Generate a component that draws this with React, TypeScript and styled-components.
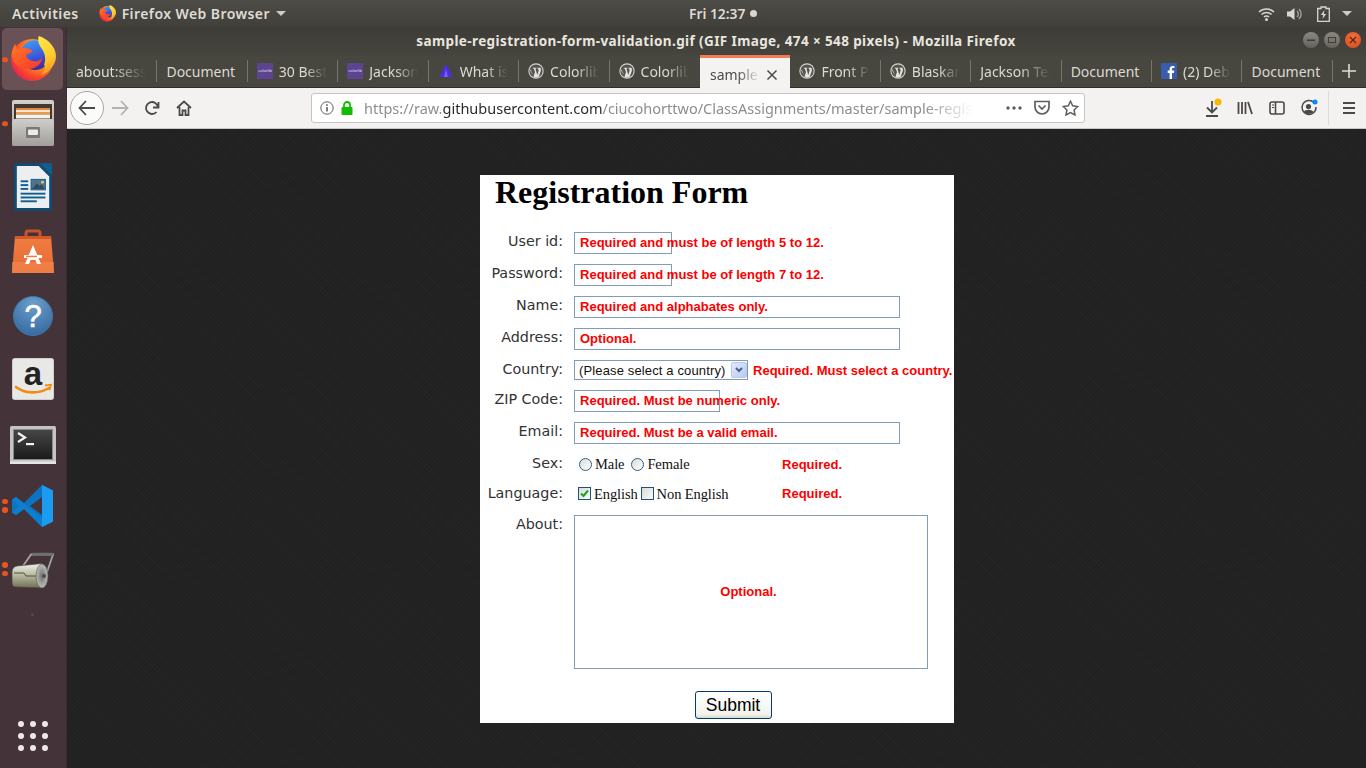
import React from "react";
import styled, { createGlobalStyle } from "styled-components";

const Global = createGlobalStyle`
  html, body { margin: 0; padding: 0; width: 1366px; height: 768px; overflow: hidden; background: #222; }
  * { box-sizing: border-box; }
`;
const uiFont = `"Noto Sans", "Open Sans", sans-serif`;

const Screen = styled.div`
  width: 1366px; height: 768px; display: flex; flex-direction: column; overflow: hidden;
`;
const TopBar = styled.header`
  height: 27px; flex: none; display: grid; grid-template-columns: 677px auto 1fr; align-items: center;
  background: linear-gradient(#4e4c46, #403f39);
  color: #dfdcd5; font: 600 14px ${uiFont}; padding: 0 14px 0 12px; letter-spacing: .42px;
`;
const TopLeft = styled.div`display: flex; align-items: center;`;
const AppMenu = styled.div`display: flex; align-items: center; gap: 6px; margin-left: 20px;`;
const Clock = styled.div`display: flex; align-items: center; gap: 5px; font-size: 13.8px; letter-spacing: 0;`;
const ClockDot = styled.span`width: 7px; height: 7px; border-radius: 50%; background: #d8d6d0;`;
const TopRight = styled.div`display: flex; justify-content: flex-end; align-items: center; gap: 12px;`;
const Caret = styled.span`
  width: 0; height: 0; border-left: 5px solid transparent; border-right: 5px solid transparent;
  border-top: 5px solid #cfccc6; display: block;
`;
const Body = styled.div`flex: 1; display: flex; min-height: 0;`;
const Dock = styled.nav`
  width: 67px; flex: none; display: flex; flex-direction: column; align-items: stretch;
  background: #45333a; border-right: 1px solid #3a2d33; padding-top: 1px;
`;
const DockItem = styled.div<{ $active?: boolean; $dy?: number }>`
  height: 63.7px; margin: 0 3px 0 2px; display: flex; align-items: center; justify-content: center;
  position: relative; 
  padding-top: ${p => (p.$dy && p.$dy > 0 ? p.$dy * 2 : 0)}px;
  padding-bottom: ${p => (p.$dy && p.$dy < 0 ? -p.$dy * 2 : 0)}px;
  &::before {
    content: ""; position: absolute; left: 0; right: 0; top: 0; height: 62px; border-radius: 5px; z-index: 0;
    background: ${p => (p.$active ? "#6a5156" : "transparent")};
  }
  & > svg { position: relative; z-index: 1; }
`;
const RunDots = styled.div`
  position: absolute; left: 0; top: 50%; transform: translateY(-50%); display: flex; flex-direction: column; gap: 3px; z-index: 1;
`;
const RunDot = styled.span`width: 5.5px; height: 5.5px; border-radius: 50%; background: #e95420; display: block;`;
const DockSpacer = styled.div`flex: 1;`;
const AppsGrid = styled.div`
  display: grid; grid-template-columns: repeat(3, 6px); gap: 6px; justify-content: center; padding: 0 1px 17px 0;
`;
const AppsDot = styled.span`width: 6px; height: 6px; border-radius: 50%; background: #ece9ea;`;

const Win = styled.main`flex: 1; min-width: 0; display: flex; flex-direction: column;`;
const TitleBar = styled.div`
  height: 28px; flex: none; position: relative; display: flex; align-items: center; justify-content: center;
  background: linear-gradient(#3d3c36, #45443e);
  color: #e8e6df; font: 700 13.5px ${uiFont}; letter-spacing: .39px; padding-right: 1px;
`;
const WinButtons = styled.div`position: absolute; right: 5px; top: 5px; display: flex; gap: 5px;`;
const WinBtn = styled.span<{ $close?: boolean }>`
  width: 16px; height: 16px; border-radius: 50%; display: flex; align-items: center; justify-content: center;
  background: ${p => (p.$close ? "radial-gradient(circle at 50% 35%, #f0703f, #d8481c)" : "linear-gradient(#8a8880, #64625b)")};
`;
const TabStrip = styled.div`
  height: 33px; flex: none; display: flex; background: #47463f; border-bottom: 1px solid #2f2e2a;
`;
const Tab = styled.div<{ $active?: boolean; $noSep?: boolean }>`
  width: 90.43px; flex: none; position: relative; display: flex; align-items: center; gap: 6px; padding: ${p => (p.$active ? "3px 12px 0 10px" : "0 11px 0 9px")};
  color: ${p => (p.$active ? "#4a4a4a" : "#dcdad3")}; font: 400 14px ${uiFont};
  background: ${p => (p.$active ? "#f4f3f1" : "transparent")};
  height: ${p => (p.$active ? "33px" : "32px")};
  border-top: ${p => (p.$active ? "3px solid #ef7e54" : "none")};
  &::after {
    content: ""; position: absolute; right: 0; top: 5px; bottom: 5px; width: 1px;
    background: ${p => (p.$active || p.$noSep ? "transparent" : "#75736c")};
  }
`;
const TabText = styled.span`
  flex: 1; min-width: 0; white-space: nowrap; overflow: hidden;
  mask-image: linear-gradient(to right, #000 55%, transparent 100%);
`;
const TabFull = styled(TabText)`mask-image: none; overflow: visible;`;
const NewTab = styled.div`flex: 1; display: flex; align-items: center; justify-content: center; color: #e0ded8;`;
const NavBar = styled.div`
  height: 41px; flex: none; display: flex; align-items: center; background: #f3f2f0; border-bottom: 1px solid #c9c7c3;
  padding: 0 0 1px 3px;
`;
const BackBtn = styled.div`
  width: 34px; height: 34px; border-radius: 50%; border: 1px solid #a9a8a5; background: #fbfbfa;
  display: flex; align-items: center; justify-content: center; flex: none;
`;
const NavIcon = styled.div<{ $w?: number; $ml?: number }>`
  width: ${p => p.$w ?? 32}px; margin-left: ${p => p.$ml ?? 0}px; flex: none; display: flex; align-items: center; justify-content: center; position: relative;
`;
const UrlBar = styled.div`
  width: 774px; height: 30px; margin-left: 111px; margin-right: 111px; flex: none; display: flex; align-items: center;
  background: #fff; border: 1px solid #c6c5c2; border-radius: 3px; padding: 0 3px 0 8px;
  font: 400 14.5px ${uiFont}; color: #2a2a2a;
`;
const UrlText = styled.div`
  flex: 1; min-width: 0; white-space: nowrap; overflow: hidden; margin-left: 11px; padding-top: 1px; color: #8d8d8d;
  mask-image: linear-gradient(to right, #000 92%, transparent 100%);
`;
const UrlHost = styled.span`color: #2c2c2c;`;
const UrlGlyph = styled.svg<{ $ml?: number; $mr?: number }>`
  flex: none; margin-left: ${p => p.$ml ?? 0}px; margin-right: ${p => p.$mr ?? 0}px;
`;
const ToolSep = styled.span`width: 1px; height: 34px; background: #dcdbd8; margin: 0 3px 0 3px; flex: none;`;
const Viewer = styled.div`
  flex: 1; min-height: 0; display: flex; justify-content: center; align-items: flex-start; padding: 46px 0 0 1px;
  background-color: #222222;
  background-image:
    repeating-linear-gradient(45deg, rgba(255,255,255,.012) 0 1px, transparent 1px 3px),
    repeating-linear-gradient(-45deg, rgba(0,0,0,.07) 0 1px, transparent 1px 3px);
`;
const Sheet = styled.section`
  width: 474px; height: 548px; background: #fff; flex: none; overflow: hidden;
`;
const Title = styled.h1`
  margin: 0; padding: 0 0 0 15px; height: 57px; font: 700 32px/35px "Liberation Serif", serif; color: #000;
`;
const FormGrid = styled.form`
  display: grid; grid-template-columns: 83px 1fr; column-gap: 11px; row-gap: 10px;
`;
const Label = styled.label<{ $h?: number }>`
  text-align: right; font: 400 14.3px/18px "DejaVu Sans", sans-serif; color: #333; white-space: nowrap;
  height: ${p => p.$h ?? 22}px;
`;
const Cell = styled.div<{ $h?: number; $pb?: number }>`
  display: flex; align-items: center; height: ${p => p.$h ?? 22}px; min-width: 0; padding-bottom: ${p => p.$pb ?? 0}px;
`;
const Field = styled.div<{ $w: number; $h?: number; $center?: boolean }>`
  width: ${p => p.$w}px; height: ${p => p.$h ?? 22}px; border: 1px solid #7f9db9; padding-left: 5px;
  display: flex; align-items: center; flex: none; white-space: nowrap;
  ${p => (p.$center ? "justify-content: center; padding: 0 5px 0 0;" : "")}
`;
const Err = styled.span<{ $ml?: number; $mt?: number }>`
  font: 700 13px/16px "Liberation Sans", sans-serif; color: #fb0000; white-space: nowrap; letter-spacing: .01px;
  margin-left: ${p => p.$ml ?? 0}px; margin-top: ${p => p.$mt ?? 0}px;
`;
const Select = styled.div`
  width: 174px; height: 20px; border: 1px solid #7f9db9; display: flex; align-items: center; justify-content: space-between;
  padding: 0 0 0 4px; font: 400 13px "Liberation Sans", sans-serif; color: #111; flex: none; white-space: nowrap; letter-spacing: .14px;
`;
const SelectArrow = styled.span`
  width: 16px; height: 16px; margin-right: 0; border-radius: 2px; border: 1px solid #b9c9ee; flex: none;
  background: linear-gradient(135deg, #e0e8fb, #b9cbf3); display: flex; align-items: center; justify-content: center;
`;
const Radio = styled.span`
  width: 13px; height: 13px; border-radius: 50%; border: 1px solid #2f5c8f; flex: none;
  background: linear-gradient(135deg, #dcdcd4, #fff); display: block;
`;
const Check = styled.span`
  width: 13px; height: 13px; border: 1px solid #1c5180; flex: none; display: flex; align-items: center; justify-content: center;
  background: linear-gradient(135deg, #dcdcd4, #fbfbf9);
`;
const Serif = styled.span`
  font: 400 14.5px/18px "Liberation Serif", serif; color: #111; white-space: nowrap; letter-spacing: -.1px;
`;
const Choices = styled.div<{ $w: number; $pl: number }>`
  width: ${p => p.$w}px; padding-left: ${p => p.$pl}px; display: flex; align-items: center; flex: none; gap: 3px;
`;
const ChoiceGap = styled.span<{ $w: number }>`width: ${p => p.$w}px; flex: none;`;
const SubmitRow = styled.div`display: flex; justify-content: center; padding: 12px 0 0 32px; grid-column: 1 / -1;`;
const Submit = styled.button`
  width: 77px; height: 28px; border: 1px solid #003c74; border-radius: 3px; padding: 0;
  background: linear-gradient(#ffffff, #f3f3ec 85%, #dcd8cc); font: 400 17.5px "Liberation Sans", sans-serif; color: #000;
`;
const FaintMark = styled.span`width: 3px; height: 3px; background: #544249; margin: 12px auto 0; display: block; position: relative; left: -1px;`;

const Fx = ({ s, id }: { s: number; id: string }) => (
  <svg width={s} height={s} viewBox="0 0 48 48">
    <defs>
      <radialGradient id={id + "a"} cx="72%" cy="30%" r="85%">
        <stop offset="0" stopColor="#ffd43a" /><stop offset=".4" stopColor="#ff9a1f" />
        <stop offset=".72" stopColor="#f8482a" /><stop offset="1" stopColor="#e31b5c" />
      </radialGradient>
      <linearGradient id={id + "b"} x1=".3" y1="0" x2=".6" y2="1">
        <stop offset="0" stopColor="#3f9bf5" /><stop offset=".6" stopColor="#3a55d6" /><stop offset="1" stopColor="#3a2a9c" />
      </linearGradient>
      <linearGradient id={id + "c"} x1="0" y1="0" x2=".3" y2="1">
        <stop offset="0" stopColor="#ffec4a" /><stop offset=".7" stopColor="#ffc72c" /><stop offset="1" stopColor="#ff9a1f" />
      </linearGradient>
      <linearGradient id={id + "d"} x1="0" y1="0" x2="1" y2="1">
        <stop offset="0" stopColor="#ff7a22" /><stop offset="1" stopColor="#f8342e" />
      </linearGradient>
    </defs>
    <circle cx="23" cy="25" r="22" fill={`url(#${id}a)`} />
    <circle cx="26" cy="20" r="15.500" fill={`url(#${id}b)`} />
    <path d="M1.500 20C2 15 3.500 11 5.500 8c.5 3 1.500 5 3.500 6 1.500-1 4-2 7-1.500 2 .3 5 1 7.500 2.500-1 2-3 3.500-6 4-1 1.500-.5 3 1 4.500 2 2 6 3.500 10 2.500 2-.5 3.500-1.300 5-3-.5 6-6 11-14 11.500C11 35 2.500 29 1.500 20z" fill={`url(#${id}d)`} />
    <path d="M30 0c-1.500 5 0 9 3 13 3.500 5 5 11 2.500 17C38 33.500 35 38 32 41c9-3 16-11 16-20C48 12 40 3 30 0z" fill={`url(#${id}c)`} />
  </svg>
);
const WpIcon = () => (
  <svg width="16" height="16" viewBox="0 0 16 16">
    <circle cx="8" cy="8" r="7.7" fill="#d6d5d0" />
    <circle cx="8" cy="8" r="6.6" fill="#55544e" />
    <path d="M2.5 6.2 5.5 13.6 7 9 5.7 5.4h-1V4.8h3.700v.6h-1L9.300 12l1.200-4c.3-1 .1-1.700-.5-2.600h-.6v-.6h3c.4 1 .7 2 .4 3.200l-2.200 6c-1.600.6-3 .6-4.500.2L2.200 7.600z" fill="#e5e4df" />
  </svg>
);
const ColorlibIcon = () => (
  <svg width="16" height="16" viewBox="0 0 16 16">
    <rect width="16" height="16" fill="#5c4490" />
    <text x="8" y="9.400" textAnchor="middle" fontFamily="Liberation Sans" fontSize="4.300" fill="#e0d9ee">colorlib</text>
  </svg>
);
const AtlasIcon = () => (
  <svg width="16" height="16" viewBox="0 0 16 16">
    <path d="M8 1 15 14H10L8 9.5 6 14H1z" fill="#4b2fd8" />
    <path d="M8 6 10 14H6z" fill="#7c5cff" />
  </svg>
);
const FbIcon = () => (
  <svg width="16" height="16" viewBox="0 0 16 16">
    <rect width="16" height="16" fill="#3b5cab" />
    <path d="M11 16V10h2l.3-2.4H11V6.200c0-.7.3-1.100 1.100-1.100h1.300V3c-.5 0-1.100-.1-1.800-.1-1.800 0-3 1.100-3 3.100v1.600H6.700V10h1.900v6z" fill="#fff" />
  </svg>
);

const tabs: { t: string; i?: React.ReactNode; active?: boolean; full?: boolean }[] = [
  { t: "about:sessionrestore" },
  { t: "Document", full: true },
  { t: "30 Best Free", i: <ColorlibIcon /> },
  { t: "Jackson Free", i: <ColorlibIcon /> },
  { t: "What is a thing", i: <AtlasIcon /> },
  { t: "Colorlib Free", i: <WpIcon /> },
  { t: "Colorlib Free", i: <WpIcon /> },
  { t: "sample-registration", active: true },
  { t: "Front Page", i: <WpIcon /> },
  { t: "Blaskan Free", i: <WpIcon /> },
  { t: "Jackson Template" },
  { t: "Document", full: true },
  { t: "(2) Debug", i: <FbIcon /> },
  { t: "Document", full: true },
];

const FilesIcon = () => (
  <svg width="42" height="46" viewBox="0 0 42 46">
    <defs>
      <linearGradient id="cab" x1="0" y1="0" x2="0" y2="1"><stop offset="0" stopColor="#d2d1cd" /><stop offset="1" stopColor="#9c9b97" /></linearGradient>
      <linearGradient id="cabf" x1="0" y1="0" x2="0" y2="1"><stop offset="0" stopColor="#cfcecb" /><stop offset="1" stopColor="#a09f9b" /></linearGradient>
    </defs>
    <path d="M2 0h38a2 2 0 0 1 2 2v42a2 2 0 0 1-2 2H2a2 2 0 0 1-2-2V2a2 2 0 0 1 2-2z" fill="url(#cab)" />
    <rect x="2" y="4" width="38" height="18" fill="#45382e" />
    <rect x="4" y="8" width="34" height="2" fill="#d98a45" />
    <rect x="4" y="10" width="34" height="2" fill="#f3e6cc" />
    <rect x="4" y="12" width="34" height="2.500" fill="#ee9a4c" />
    <rect x="4" y="14.500" width="34" height="4" fill="#f4f2ec" />
    <path d="M2 19h38l2 3v22a2 2 0 0 1-2 2H2a2 2 0 0 1-2-2V22z" fill="url(#cabf)" />
    <rect x="14" y="27" width="14" height="11" rx="1" fill="#7a7976" /><rect x="16" y="29.500" width="10" height="5.500" rx="1" fill="#ecebe7" />
  </svg>
);
const WriterIcon = () => (
  <svg width="40" height="48" viewBox="0 0 42 50">
    <path d="M2 0H28L41 13V47a3 3 0 0 1-3 3H4a3 3 0 0 1-3-3V2z" fill="#0f4c74" />
    <path d="M4 3H27L38 14V47H4z" fill="#eceeef" />
    <path d="M28 0 41 13V1a1 1 0 0 0-1-1z" fill="#0f5e92" />
    <g fill="#0f5e92"><rect x="8" y="18" width="8" height="2" /><rect x="8" y="22" width="8" height="2" /><rect x="8" y="26" width="8" height="2" /><rect x="8" y="31" width="26" height="2" /><rect x="8" y="35" width="26" height="2" /><rect x="8" y="39" width="17" height="2" /></g>
    <rect x="19" y="17" width="15" height="11" fill="#51738f" stroke="#1a5c8a" />
    <path d="M20 27l5-6 3 3 2-2 3 5z" fill="#33495c" /><circle cx="31" cy="20" r="1.500" fill="#e8c84e" />
  </svg>
);
const SoftwareIcon = () => (
  <svg width="42" height="44" viewBox="0 0 42 44">
    <defs><linearGradient id="bag" x1="0" y1="0" x2="0" y2="1"><stop offset="0" stopColor="#f07d42" /><stop offset="1" stopColor="#e86a33" /></linearGradient></defs>
    <path d="M14 9V4a2 2 0 0 1 2-2h10a2 2 0 0 1 2 2v5" fill="none" stroke="#c9502a" strokeWidth="3" />
    <path d="M3 7h36l3 37H0z" fill="url(#bag)" /><path d="M3 7h36l.4 3H2.600z" fill="#d15a2a" />
    <path d="M0 33h42v11H0z" fill="#f28b52" opacity=".6" />
    <path d="M21 16l-8 19h4l1.500-4h5l1.500 4h4z" fill="#fff" /><rect x="12" y="26" width="18" height="3" fill="#fff" /><rect x="14" y="26.700" width="11" height="1.500" fill="#f07d42" />
  </svg>
);
const HelpIcon = () => (
  <svg width="42" height="42" viewBox="0 0 42 42">
    <defs><radialGradient id="hp" cx="50%" cy="20%" r="90%"><stop offset="0" stopColor="#6d9fca" /><stop offset="1" stopColor="#2f649d" /></radialGradient></defs>
    <circle cx="21" cy="21" r="19.500" fill="url(#hp)" stroke="#3f77ab" />
    <text x="21" y="32" textAnchor="middle" fontFamily="Liberation Sans" fontWeight="400" fontSize="31" fill="#fff" stroke="#fff" strokeWidth=".6">?</text>
  </svg>
);
const AmazonIcon = () => (
  <svg width="42" height="42" viewBox="0 0 42 42">
    <rect x=".5" y=".5" width="41" height="41" rx="2" fill="#e8e8e6" stroke="#cfcfcc" />
    <text x="21" y="27" textAnchor="middle" fontFamily="Liberation Sans" fontWeight="700" fontSize="33" fill="#222">a</text>
    <path d="M4 29c9 7 23 7 33 1" fill="none" stroke="#f08c12" strokeWidth="2.600" strokeLinecap="round" />
    <path d="M33 27.500l6-.8-1.500 5.500" fill="none" stroke="#f08c12" strokeWidth="1.800" />
  </svg>
);
const TerminalIcon = () => (
  <svg width="46" height="38" viewBox="0 0 46 38">
    <defs><linearGradient id="tm" x1="0" y1="0" x2="0" y2="1"><stop offset="0" stopColor="#474747" /><stop offset="1" stopColor="#1a1a1a" /></linearGradient></defs>
    <rect x="0" y="0" width="46" height="38" rx="1.500" fill="#c4c4c2" />
    <rect x="3.500" y="3.500" width="39" height="30" fill="url(#tm)" stroke="#8a8a88" />
    <path d="M8 7l7 4.500-7 4.500" fill="none" stroke="#f2f2f2" strokeWidth="2.200" /><rect x="16" y="17" width="8" height="2.200" fill="#f2f2f2" />
    <rect x="0" y="35.500" width="46" height="2.500" fill="#e4e4e2" />
  </svg>
);
const VsIcon = () => (
  <svg width="44" height="44" viewBox="0 0 44 44">
    <path d="M31 1 13 19 5 13l-4 2.500v13L5 31l8-6 18 18 11-5.500V6.500zM31 13v18L19 22z" fill="#0b73c2" />
    <path d="M31 1l11 5.500v31L31 43z" fill="#1b9cf0" />
    <path d="M1 15.500 5 13l26 21 0 9L13 25 5 31l-4-2.500L8 22z" fill="#0d85d6" opacity=".7" />
  </svg>
);
const ScanIcon = () => (
  <svg width="44" height="38" viewBox="0 0 44 38">
    <defs>
      <linearGradient id="rl" x1="0" y1="0" x2="0" y2="1"><stop offset="0" stopColor="#f0f0ea" /><stop offset=".45" stopColor="#bcbda3" /><stop offset="1" stopColor="#6f7056" /></linearGradient>
      <radialGradient id="rc"><stop offset="0" stopColor="#6f6f6c" /><stop offset="1" stopColor="#bdbdb8" /></radialGradient>
    </defs>
    <path d="M12 14 20 2.500H42L35 23" fill="none" stroke="#a3a39f" strokeWidth="1.800" />
    <rect x="21" y="0.800" width="21" height="3" rx="1.500" fill="#6e6e6b" />
    <path d="M1 20q0-5 5-6l25-2.500V36L5 35c-3 0-4-2-4-5z" fill="url(#rl)" stroke="#44443c" strokeWidth=".7" />
    <path d="M3 21h10l2 3h12" fill="none" stroke="#4e4e44" strokeWidth="1" />
    <ellipse cx="31" cy="24" rx="6" ry="12" fill="url(#rc)" stroke="#555" strokeWidth=".6" />
    <circle cx="33" cy="24" r="2" fill="#4e4e4c" />
  </svg>
);
const Tb = styled.svg<{ $ml?: number }>`display: block; flex: none; margin-left: ${p => p.$ml ?? 0}px;`;

export default function App() {
  return (
    <Screen>
      <Global />
      <TopBar>
        <TopLeft>
          Activities
          <AppMenu>
            <Fx s={17} id="t" />
            Firefox Web Browser
            <Caret />
          </AppMenu>
        </TopLeft>
        <Clock>Fri 12:37 <ClockDot /></Clock>
        <TopRight>
          <Tb width="17" height="14" viewBox="0 0 17 14">
            <path d="M1 5a11 11 0 0 1 15 0M3.500 7.500a7.500 7.500 0 0 1 10 0M6 10a3.500 3.500 0 0 1 5 0" fill="none" stroke="#d8d6d0" strokeWidth="1.500" />
            <circle cx="8.500" cy="12.500" r="1.500" fill="#d8d6d0" />
          </Tb>
          <Tb width="16" height="14" viewBox="0 0 16 14">
            <path d="M0 4.500h3L7.500 1v12L3 9.500H0z" fill="#d8d6d0" />
            <path d="M10 4a4 4 0 0 1 0 6M12 2a7 7 0 0 1 0 10" fill="none" stroke="#a8a6a0" strokeWidth="1.300" />
          </Tb>
          <Tb width="13" height="16" viewBox="0 0 13 16" $ml={2}>
            <path d="M4 1h5v1.500h3.300V15.300H.7V2.500H4z" fill="none" stroke="#d8d6d0" strokeWidth="1.300" />
            <path d="M7.500 4 3.800 9h2.400L5.500 13l3.700-5H6.800z" fill="#d8d6d0" />
          </Tb>
          <Caret />
        </TopRight>
      </TopBar>
      <Body>
        <Dock>
          <DockItem $active $dy={-1}><RunDots><RunDot /></RunDots><Fx s={46} id="d" /></DockItem>
          <DockItem $dy={-1}><RunDots><RunDot /></RunDots><FilesIcon /></DockItem>
          <DockItem><WriterIcon /></DockItem>
          <DockItem><SoftwareIcon /></DockItem>
          <DockItem $dy={1}><HelpIcon /></DockItem>
          <DockItem $dy={1}><AmazonIcon /></DockItem>
          <DockItem $dy={3}><TerminalIcon /></DockItem>
          <DockItem><RunDots><RunDot /><RunDot /></RunDots><VsIcon /></DockItem>
          <DockItem $dy={2}><RunDots><RunDot /><RunDot /></RunDots><ScanIcon /></DockItem>
          <FaintMark />
          <DockSpacer />
          <AppsGrid>{Array.from({ length: 9 }, (_, i) => <AppsDot key={i} />)}</AppsGrid>
        </Dock>
        <Win>
          <TitleBar>
            sample-registration-form-validation.gif (GIF Image, 474 × 548 pixels) - Mozilla Firefox
            <WinButtons>
              <WinBtn><svg width="10" height="10" viewBox="0 0 10 10"><rect x="1" y="4.500" width="8" height="1.500" fill="#3f3e39" /></svg></WinBtn>
              <WinBtn><svg width="10" height="10" viewBox="0 0 10 10"><rect x="1.500" y="2.500" width="7" height="5" fill="none" stroke="#3f3e39" /></svg></WinBtn>
              <WinBtn $close><svg width="10" height="10" viewBox="0 0 10 10"><path d="M2 2l6 6M8 2l-6 6" stroke="#5a2410" strokeWidth="1.300" /></svg></WinBtn>
            </WinButtons>
          </TitleBar>
          <TabStrip>
            {tabs.map((t, i) => (
              <Tab key={i} $active={t.active} $noSep={tabs[i + 1]?.active}>
                {t.i}
                {t.full ? <TabFull>{t.t}</TabFull> : <TabText>{t.t}</TabText>}
                {t.active && (
                  <svg width="12" height="12" viewBox="0 0 12 12" style={{ flex: "none" }}>
                    <path d="M1.500 1.500l9 9M10.500 1.500l-9 9" stroke="#4a4a48" strokeWidth="1.500" />
                  </svg>
                )}
              </Tab>
            ))}
            <NewTab>
              <svg width="14" height="14" viewBox="0 0 14 14"><path d="M7 0v14M0 7h14" stroke="#dedcd6" strokeWidth="1.600" /></svg>
            </NewTab>
          </TabStrip>
          <NavBar>
            <BackBtn>
              <svg width="18" height="16" viewBox="0 0 18 16"><path d="M8 1 1.500 8 8 15M2 8h15" fill="none" stroke="#4a4a4a" strokeWidth="1.800" /></svg>
            </BackBtn>
            <NavIcon>
              <svg width="18" height="16" viewBox="0 0 18 16"><path d="M10 1l6.500 7-6.500 7M16 8H1" fill="none" stroke="#b3b3b1" strokeWidth="1.800" /></svg>
            </NavIcon>
            <NavIcon>
              <svg width="16" height="16" viewBox="0 0 16 16"><path d="M14 7.500A6 6 0 1 0 12.500 12M14.500 2v5.500H9" fill="none" stroke="#4a4a4a" strokeWidth="1.800" /></svg>
            </NavIcon>
            <NavIcon>
              <svg width="16" height="16" viewBox="0 0 16 16"><path d="M1 8l7-6.500L15 8M3.500 7v8h3v-4.500h3V15h3V7" fill="none" stroke="#4a4a4a" strokeWidth="1.800" /></svg>
            </NavIcon>
            <UrlBar>
              <UrlGlyph width="14" height="14" viewBox="0 0 14 14"><circle cx="7" cy="7" r="6.200" fill="none" stroke="#5e5e5e" /><rect x="6.200" y="6" width="1.600" height="4.500" fill="#5e5e5e" /><rect x="6.200" y="3.300" width="1.600" height="1.600" fill="#5e5e5e" /></UrlGlyph>
              <UrlGlyph width="12" height="14" viewBox="0 0 12 14" $ml={7}><path d="M3 6V4a3 3 0 0 1 6 0v2" fill="none" stroke="#12bc00" strokeWidth="1.800" /><rect x="0.500" y="6" width="11" height="8" rx="1" fill="#12bc00" /></UrlGlyph>
              <UrlText>https://raw.<UrlHost>githubusercontent.com</UrlHost>/ciucohorttwo/ClassAssignments/master/sample-registration-form-validation.gif</UrlText>
              <UrlGlyph width="16" height="4" viewBox="0 0 16 4" $ml={33}><circle cx="2" cy="2" r="1.700" fill="#5e5e5e" /><circle cx="8" cy="2" r="1.700" fill="#5e5e5e" /><circle cx="14" cy="2" r="1.700" fill="#5e5e5e" /></UrlGlyph>
              <UrlGlyph width="16" height="15" viewBox="0 0 16 15" $ml={12}><path d="M1 1.500h14V7a7 7 0 0 1-14 0z M4.500 5.500 8 9l3.500-3.500" fill="none" stroke="#5e5e5e" strokeWidth="1.700" /></UrlGlyph>
              <UrlGlyph width="17" height="16" viewBox="0 0 17 16" $ml={12} $mr={2}><path d="M8.500 1.200l2.200 4.600 5 .7-3.600 3.500.9 5-4.500-2.400L4 15l.9-5L1.300 6.500l5-.7z" fill="none" stroke="#5e5e5e" strokeWidth="1.500" /></UrlGlyph>
            </UrlBar>
            <NavIcon $ml={1}>
              <svg width="20" height="20" viewBox="0 0 20 20"><path d="M9 3v11M4 9.500l5 5 5-5M3 18h12" fill="none" stroke="#4a4a4a" strokeWidth="1.800" /><circle cx="15" cy="4" r="3.500" fill="#f9b700" /></svg>
            </NavIcon>
            <NavIcon>
              <svg width="16" height="14" viewBox="0 0 16 14"><path d="M1.500 1v12M5 1v12M8.500 1v12M11 1l4 12" fill="none" stroke="#4a4a4a" strokeWidth="1.800" /></svg>
            </NavIcon>
            <NavIcon>
              <svg width="16" height="14" viewBox="0 0 16 14"><rect x="1" y="1" width="14" height="12" rx="2" fill="none" stroke="#4a4a4a" strokeWidth="1.600" /><path d="M6.500 1v12" stroke="#4a4a4a" strokeWidth="1.600" /><path d="M3 4h2M3 6.500h2" stroke="#4a4a4a" /></svg>
            </NavIcon>
            <NavIcon>
              <svg width="18" height="18" viewBox="0 0 18 18"><path d="M14 3.500A7 7 0 1 0 16 8" fill="none" stroke="#4a4a4a" strokeWidth="1.500" /><circle cx="8.500" cy="7.500" r="2.600" fill="#4a4a4a" /><path d="M3.500 13c2-3 8-3 10 0-2 2.500-8 2.500-10 0z" fill="#4a4a4a" /><circle cx="15" cy="3" r="2.500" fill="#0a84ff" /></svg>
            </NavIcon>
            <ToolSep />
            <NavIcon $w={34}>
              <svg width="14" height="12" viewBox="0 0 14 12"><path d="M1 1h12M1 6h12M1 11h12" stroke="#4a4a4a" strokeWidth="1.800" /></svg>
            </NavIcon>
          </NavBar>
          <Viewer>
            <Sheet>
              <Title>Registration Form</Title>
              <FormGrid>
                <Label>User id:</Label>
                <Cell><Field $w={98}><Err>Required and must be of length 5 to 12.</Err></Field></Cell>
                <Label>Password:</Label>
                <Cell><Field $w={98}><Err>Required and must be of length 7 to 12.</Err></Field></Cell>
                <Label>Name:</Label>
                <Cell><Field $w={326}><Err>Required and alphabates only.</Err></Field></Cell>
                <Label>Address:</Label>
                <Cell><Field $w={326}><Err>Optional.</Err></Field></Cell>
                <Label $h={20}>Country:</Label>
                <Cell $h={20}>
                  <Select>
                    (Please select a country)
                    <SelectArrow>
                      <svg width="8" height="6" viewBox="0 0 8 6"><path d="M1 1l3 3 3-3" fill="none" stroke="#4d6185" strokeWidth="2" /></svg>
                    </SelectArrow>
                  </Select>
                  <Err $ml={5} $mt={1}>Required. Must select a country.</Err>
                </Cell>
                <Label>ZIP Code:</Label>
                <Cell><Field $w={146}><Err>Required. Must be numeric only.</Err></Field></Cell>
                <Label>Email:</Label>
                <Cell><Field $w={326}><Err>Required. Must be a valid email.</Err></Field></Cell>
                <Label $h={20}>Sex:</Label>
                <Cell $h={20}>
                  <Choices $w={208} $pl={5}>
                    <Radio /><Serif>Male</Serif><ChoiceGap $w={1} /><Radio /><Serif>Female</Serif>
                  </Choices>
                  <Err $mt={1}>Required.</Err>
                </Cell>
                <Label $h={21}>Language:</Label>
                <Cell $h={21} $pb={2}>
                  <Choices $w={208} $pl={4}>
                    <Check><svg width="9" height="9" viewBox="0 0 9 9"><path d="M1 4.500l2.500 2.500L8 1.500" fill="none" stroke="#21a121" strokeWidth="2" /></svg></Check>
                    <Serif>English</Serif><Check /><Serif>Non English</Serif>
                  </Choices>
                  <Err>Required.</Err>
                </Cell>
                <Label $h={154}>About:</Label>
                <Cell $h={154}><Field $w={354} $h={154} $center><Err>Optional.</Err></Field></Cell>
                <SubmitRow><Submit type="button">Submit</Submit></SubmitRow>
              </FormGrid>
            </Sheet>
          </Viewer>
        </Win>
      </Body>
    </Screen>
  );
}
